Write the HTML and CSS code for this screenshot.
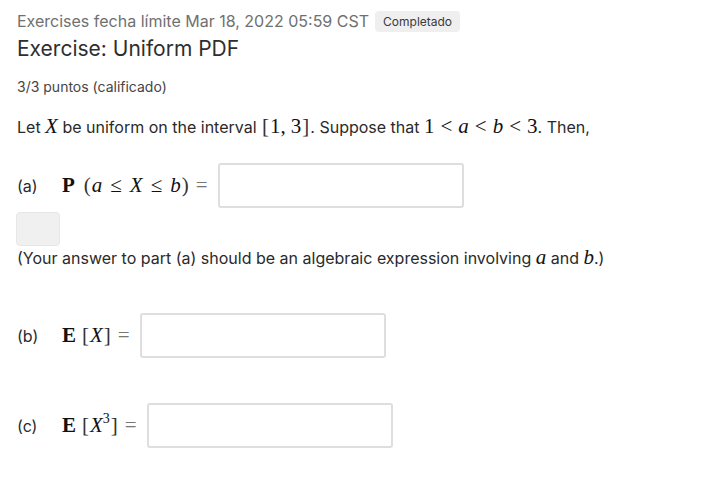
FILE: index.html
```html
<!DOCTYPE html>
<html lang="es">
<head>
<meta charset="utf-8">
<link rel="stylesheet" href="styles.css">
</head>
<body>
<div class="page">
  <div class="meta">
    <span class="due">Exercises fecha límite Mar 18, 2022 05:59 CST</span>
    <span class="badge">Completado</span>
  </div>
  <h1 class="title">Exercise: Uniform PDF</h1>
  <div class="points">3/3 puntos (calificado)</div>

  <p class="intro">Let <span class="m"><i>X</i></span> be uniform on the interval <span class="m"><span class="paren">[</span>1,<span class="sp"></span>3<span class="paren">]</span></span>. Suppose that <span class="m">1<span class="rel">&lt;</span><i>a</i><span class="rel">&lt;</span><i>b</i><span class="rel">&lt;</span>3</span>. Then,</p>

  <div class="row row-a">
    <span class="lbl">(a)</span>
    <span class="m expr"><b>P</b><span class="sp"></span><span class="paren">(</span><i>a</i><span class="rel le">&le;</span><i>X</i><span class="rel le">&le;</span><i>b</i><span class="paren">)</span><span class="rel eq">=</span></span>
    <span class="input"></span>
  </div>
  <div class="preview"></div>
  <p class="note">(Your answer to part (a) should be an algebraic expression involving <span class="m"><i>a</i></span> and <span class="m"><i>b</i></span>.)</p>

  <div class="row row-b">
    <span class="lbl">(b)</span>
    <span class="m expr"><b>E</b><span class="sp"></span><span class="paren">[</span><i>X</i><span class="paren">]</span><span class="rel eq">=</span></span>
    <span class="input"></span>
  </div>

  <div class="row row-c">
    <span class="lbl">(c)</span>
    <span class="m expr"><b>E</b><span class="sp"></span><span class="paren">[</span><i>X</i><sup>3</sup><span class="paren">]</span><span class="rel eq">=</span></span>
    <span class="input"></span>
  </div>
</div>
</body>
</html>
```
FILE: styles.css
```css
html, body { margin: 0; padding: 0; background: #fff; }
.page { padding: 9px 17px 0 17px; font-family: Inter, "Noto Sans", sans-serif; }
.meta { display: flex; align-items: center; gap: 6px; height: 24px; }
.due { font-size: 16px; color: #707070; }
.badge { font-size: 12px; color: #3a3a3a; background: #efefef; border-radius: 4px; padding: 3px 8px; line-height: 15px; }
.title { margin: 2px 0 0 0; font-size: 21px; font-weight: 400; color: #2e2e2e; line-height: 28px; }
.points { margin-top: 15px; font-size: 14px; color: #454545; line-height: 18px; }
.intro, .note, .lbl { font-family: Inter, "Noto Sans", sans-serif; font-size: 16px; color: #2a2a2a; }
.intro { margin: 18px 0 0 0; line-height: 24px; }
.m { font-family: "Liberation Serif", "DejaVu Serif", serif; font-size: 21px; color: #111; }
.m b { font-weight: 700; }
.m sup { font-size: 14px; vertical-align: 9px; line-height: 0; }
.rel { margin: 0 6px; }
.rel.le { margin: 0 8px; }
.sp { display: inline-block; width: 5px; }
.paren { color: #333; margin: 0 1px; }
.row-a .sp { width: 8px; }
.eq { color: #777; }
.row { display: flex; align-items: center; }
.lbl { width: 45px; }
.expr { margin-right: 4px; }
.input { display: block; height: 41px; width: 242px; border: 2px solid #dedede; border-radius: 3px; }
.row-a { margin-top: 24px; }
.preview { width: 42px; height: 32px; background: #f0f0f0; border: 1px solid #e6e6e6; border-radius: 4px; margin: 4px 0 0 -1px; }
.note { margin: 0; line-height: 22px; }
.row-b { margin-top: 44px; }
.row-c { margin-top: 45px; }
```
